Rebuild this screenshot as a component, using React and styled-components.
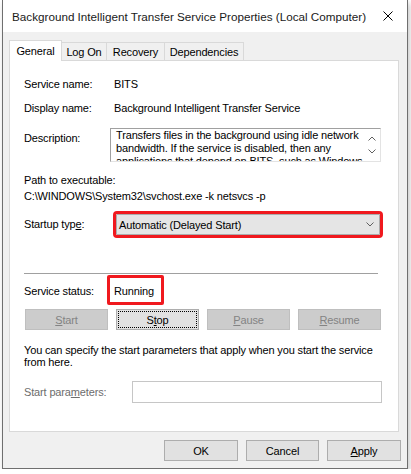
import styled, { createGlobalStyle } from 'styled-components';

const GlobalStyle = createGlobalStyle`
  html, body {
    margin: 0;
    padding: 0;
    background: #ffffff;
  }
  body {
    font-family: "Liberation Sans", Arial, sans-serif;
    font-size: 11px;
    letter-spacing: -0.15px;
    color: #000;
  }
`;

const tabs = [
  { name: 'General', w: 53, active: true },
  { name: 'Log On', w: 46 },
  { name: 'Recovery', w: 59 },
  { name: 'Dependencies', w: 80 },
];

const ChevronDown = () => (
  <svg width="8" height="5" viewBox="0 0 8 5">
    <path d="M0.5 0.5 L4 4 L7.5 0.5" fill="none" stroke="#606060" strokeWidth="1" />
  </svg>
);

const ChevronUp = () => (
  <svg width="8" height="5" viewBox="0 0 8 5">
    <path d="M0.5 4.5 L4 1 L7.5 4.5" fill="none" stroke="#606060" strokeWidth="1" />
  </svg>
);

export default function App() {
  return (
    <>
      <GlobalStyle />
      <Window>
        <TitleBar>
          <span>Background Intelligent Transfer Service Properties (Local Computer)</span>
          <svg width="10" height="10" viewBox="0 0 10 10">
            <path d="M0.5 0.5 L9.5 9.5 M9.5 0.5 L0.5 9.5" stroke="#000" strokeWidth="1" />
          </svg>
        </TitleBar>
        <Body>
          <TabStrip>
            {tabs.map((t) => (
              <Tab key={t.name} $w={t.w} $active={t.active}>{t.name}</Tab>
            ))}
          </TabStrip>
          <Panel>
            <Field $label={90} $top={0}>
              <Label>Service name:</Label>
              <Value>BITS</Value>
            </Field>
            <Field $label={90} $top={11}>
              <Label>Display name:</Label>
              <Value>Background Intelligent Transfer Service</Value>
            </Field>
            <Field $label={86} $top={13} $align="start">
              <Label $pad={4}>Description:</Label>
              <DescBox>
                <DescText>
                  <div>Transfers files in the background using idle network</div>
                  <div>bandwidth. If the service is disabled, then any</div>
                  <div>applications that depend on BITS, such as Windows</div>
                  <div>Update or MSN Explorer, will be unable to</div>
                </DescText>
                <ScrollCol>
                  <ScrollArrow><ChevronUp /></ScrollArrow>
                  <ScrollArrow><ChevronDown /></ScrollArrow>
                </ScrollCol>
              </DescBox>
            </Field>
            <Line $top={12}>Path to executable:</Line>
            <Line $top={3}>C:\WINDOWS\System32\svchost.exe -k netsvcs -p</Line>
            <Field $label={92} $top={11}>
              <Label>Startup typ<U>e</U>:</Label>
              <Combo>
                <span>Automatic (Delayed Start)</span>
                <ChevronDown />
              </Combo>
            </Field>
            <Separator />
            <Field $label={90} $top={11}>
              <Label>Service status:</Label>
              <Value><Marked>Running</Marked></Value>
            </Field>
            <ButtonRow>
              <Button disabled><U>S</U>tart</Button>
              <Button $focused>S<U>t</U>op</Button>
              <Button disabled><U>P</U>ause</Button>
              <Button disabled><U>R</U>esume</Button>
            </ButtonRow>
            <Hint>
              You can specify the start parameters that apply when you start the service from here.
            </Hint>
            <Field $label={108} $top={13}>
              <Label $disabled>Start para<U>m</U>eters:</Label>
              <ParamInput />
            </Field>
          </Panel>
          <Footer>
            <Button $w={74}>OK</Button>
            <Button $w={73}>Cancel</Button>
            <Button $w={74}><U>A</U>pply</Button>
          </Footer>
        </Body>
      </Window>
    </>
  );
}

const Window = styled.div`
  box-sizing: border-box;
  width: 406px;
  height: 469px;
  margin-left: 2px;
  display: flex;
  flex-direction: column;
  border: 1px solid #6f6f6f;
  border-top: none;
  background: #f0f0f0;
  box-shadow: 2px 3px 6px rgba(0, 0, 0, 0.22);
`;

const TitleBar = styled.div`
  flex: none;
  height: 32px;
  background: #ffffff;
  display: flex;
  align-items: center;
  justify-content: space-between;
  padding: 0 14px 0 9px;
  font-size: 11.7px;
  letter-spacing: 0;
  color: #1a1a1a;
`;

const Body = styled.div`
  flex: 1;
  display: flex;
  flex-direction: column;
  padding: 8px 8px 0 6px;
`;

const TabStrip = styled.div`
  display: flex;
  align-items: flex-end;
  height: 21px;
`;

const Tab = styled.div`
  box-sizing: border-box;
  position: relative;
  z-index: ${({ $active }) => ($active ? 1 : 0)};
  width: ${({ $w }) => $w}px;
  height: ${({ $active }) => ($active ? 21 : 19)}px;
  margin-left: ${({ $active }) => ($active ? 0 : -1)}px;
  display: flex;
  align-items: center;
  justify-content: center;
  padding-bottom: ${({ $active }) => ($active ? 1 : 0)}px;
  background: ${({ $active }) => ($active ? '#ffffff' : '#f0f0f0')};
  border: 1px solid #d9d9d9;
  border-bottom: ${({ $active }) => ($active ? 'none' : '1px solid #d9d9d9')};
`;

const Panel = styled.div`
  box-sizing: border-box;
  height: 372px;
  margin-top: -1px;
  padding: 17px 0 0 14px;
  display: flex;
  flex-direction: column;
  background: #ffffff;
  border: 1px solid #d9d9d9;
`;

const Field = styled.div`
  display: grid;
  grid-template-columns: ${({ $label }) => $label}px auto;
  align-items: ${({ $align }) => $align || 'center'};
  justify-items: start;
  margin-top: ${({ $top }) => $top}px;
`;

const Label = styled.span`
  line-height: 13px;
  padding-top: ${({ $pad }) => $pad || 0}px;
  color: ${({ $disabled }) => ($disabled ? '#6d6d6d' : '#000')};
`;

const Value = styled.span`
  line-height: 13px;
`;

const Line = styled.div`
  line-height: 13px;
  margin-top: ${({ $top }) => $top}px;
`;

const U = styled.span`
  text-decoration: underline;
`;

const DescBox = styled.div`
  box-sizing: border-box;
  width: 271px;
  height: 34px;
  display: flex;
  overflow: hidden;
  border: 1px solid;
  border-color: #a0a0a0 #e3e3e3 #e3e3e3 #a0a0a0;
`;

const DescText = styled.div`
  flex: 1;
  padding-left: 5px;
  line-height: 13px;
  white-space: nowrap;
  overflow: hidden;
`;

const ScrollCol = styled.div`
  width: 17px;
  display: flex;
  flex-direction: column;
  padding-top: 3px;
`;

const ScrollArrow = styled.div`
  height: 13px;
  display: flex;
  align-items: center;
  justify-content: center;
`;

const Combo = styled.div`
  box-sizing: border-box;
  width: 264px;
  height: 21px;
  display: flex;
  align-items: center;
  justify-content: space-between;
  padding: 0 5px 0 2px;
  background: #e5e5e5;
  border: 1px solid #acacac;
  border-radius: 1px;
  outline: 3px solid #f0191e;
`;

const Separator = styled.hr`
  width: 354px;
  height: 0;
  margin: 38px 0 0;
  border: none;
  border-top: 1px solid #a0a0a0;
`;

const Marked = styled.span`
  position: relative;
  display: inline-block;

  &::after {
    content: '';
    position: absolute;
    top: -10px;
    bottom: -7px;
    left: -7px;
    right: -10px;
    border: 3px solid #f0191e;
    border-radius: 2px;
  }
`;

const ButtonRow = styled.div`
  display: grid;
  grid-template-columns: repeat(4, 83px);
  gap: 8px;
  margin: 11px 0 0 1px;
`;

const Button = styled.button`
  box-sizing: border-box;
  position: relative;
  width: ${({ $w }) => ($w ? `${$w}px` : 'auto')};
  height: 21px;
  padding: 0;
  font: inherit;
  letter-spacing: inherit;
  background: ${({ disabled }) => (disabled ? '#cccccc' : '#e1e1e1')};
  border: 1px solid ${({ disabled }) => (disabled ? '#bfbfbf' : '#adadad')};
  color: ${({ disabled }) => (disabled ? '#838383' : '#000')};

  ${({ $focused }) => $focused && `
    &::after {
      content: '';
      position: absolute;
      inset: 1px;
      border: 1px dotted #000;
    }
  `}
`;

const Hint = styled.p`
  width: 357px;
  margin: 14px 0 0;
  line-height: 12px;
`;

const ParamInput = styled.div`
  box-sizing: border-box;
  width: 250px;
  height: 22px;
  background: #ffffff;
  border: 1px solid #c6c6c6;
`;

const Footer = styled.div`
  display: flex;
  justify-content: flex-end;
  gap: 8px;
  margin: 8px -2px 0 0;
`;
